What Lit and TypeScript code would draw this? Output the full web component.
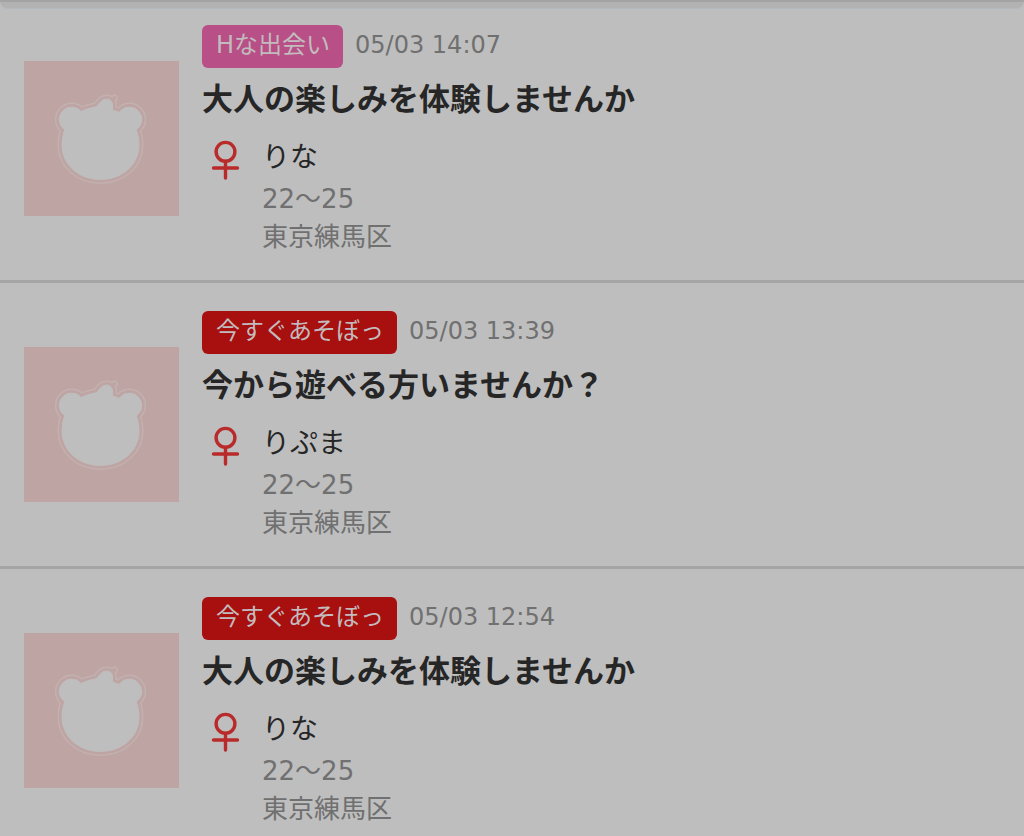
import { LitElement, html, css, svg } from "lit";
import { customElement, property } from "lit/decorators.js";

interface Post {
  category: string;
  tone: "pink" | "red";
  time: string;
  title: string;
  name: string;
  age: string;
  area: string;
}

const POSTS: Post[] = [
  { category: "Hな出会い", tone: "pink", time: "05/03 14:07", title: "大人の楽しみを体験しませんか", name: "りな", age: "22〜25", area: "東京練馬区" },
  { category: "今すぐあそぼっ", tone: "red", time: "05/03 13:39", title: "今から遊べる方いませんか？", name: "りぷま", age: "22〜25", area: "東京練馬区" },
  { category: "今すぐあそぼっ", tone: "red", time: "05/03 12:54", title: "大人の楽しみを体験しませんか", name: "りな", age: "22〜25", area: "東京練馬区" },
];

// Bear silhouette: two ears, a head and a sprout; reused for outline and fill.
const bear = svg`
  <circle cx="47.7" cy="58.5" r="12.4"/>
  <circle cx="105.3" cy="58.5" r="12.4"/>
  <path d="M58 50C63 47.500 69 46.500 73 45.500C75.500 41 79 38 83 38C86.500 38 88.500 41 88.500 44V49C96 51 106 56 111 66C114 72 115 78 115 84C115 104 98 118.500 76.500 118.500C55 118.500 38 104 38 84C38 78 39 72 41.500 67Z"/>`;

@customElement("post-row")
export class PostRow extends LitElement {
  @property({ attribute: false }) post!: Post;

  static styles = css`
    :host { display: block; }
    .row {
      display: flex;
      align-items: center;
      gap: 23px;
      padding: 24px;
      border-bottom: 3px solid #a5a5a5;
      color: inherit;
      text-decoration: none;
    }
    .avatar { flex: none; width: 155px; height: 155px; background: #bea4a3; }
    .rim { fill: #c2b1b0; stroke: #c2b1b0; stroke-width: 9; stroke-linejoin: round; }
    .gap { fill: #bea4a3; stroke: #bea4a3; stroke-width: 6; stroke-linejoin: round; }
    .face { fill: #bebebe; stroke: #bebebe; stroke-width: 1; }
    .stem-rim { fill: none; stroke: #c2b1b0; stroke-width: 7; stroke-linecap: round; }
    .stem-gap { fill: none; stroke: #bea4a3; stroke-width: 4; stroke-linecap: round; }
    .body { flex: 1; min-width: 0; padding-top: 4px; }
    .meta { display: flex; align-items: flex-start; gap: 12px; }
    .badge {
      padding: 0 13px 3px 14px;
      border-radius: 6px;
      font-size: 24px;
      line-height: 40px;
      color: #c2bcbe;
    }
    .pink { background: #b84f86; }
    .red { background: #a80f0f; }
    .time { font-size: 24px; line-height: 40px; color: #707070; }
    .title { margin: 8px 0 14px; font-size: 31px; line-height: 46px; font-weight: 700; color: #262626; }
    .person { display: flex; align-items: flex-start; gap: 14px; }
    .sex { flex: none; width: 46px; height: 50px; }
    .sex path, .sex circle { fill: none; stroke: #b92a2a; stroke-width: 3.4; stroke-linecap: round; }
    .name { font-size: 28px; line-height: 44px; color: #262626; }
    .detail { font-size: 26px; line-height: 38px; color: #707070; }
  `;

  render() {
    const p = this.post;
    return html`
      <a class="row" href="#">
        <svg class="avatar" viewBox="0 0 155 155" aria-hidden="true">
          <g class="rim">${bear}</g>
          <path class="stem-rim" d="M88 45C87.500 40 88.500 38 90.500 37"/>
          <g class="gap">${bear}</g>
          <path class="stem-gap" d="M88 45C87.500 40 88.500 38 90.500 37"/>
          <g class="face">${bear}</g>
        </svg>
        <div class="body">
          <div class="meta">
            <span class="badge ${p.tone}">${p.category}</span>
            <time class="time">${p.time}</time>
          </div>
          <h2 class="title">${p.title}</h2>
          <div class="person">
            <svg class="sex" viewBox="0 0 46 50" role="img" aria-label="女性">
              <circle cx="23.500" cy="15.800" r="9.400"/>
              <path d="M23.500 25.500V42M11.500 32H35.500"/>
            </svg>
            <div>
              <div class="name">${p.name}</div>
              <div class="detail">${p.age}</div>
              <div class="detail">${p.area}</div>
            </div>
          </div>
        </div>
      </a>`;
  }
}

@customElement("app-root")
export class AppRoot extends LitElement {
  static styles = css`
    :host {
      display: block;
      position: relative;
      height: 100vh;
      overflow: hidden;
      background: #bebebe;
      font-family: "DejaVu Sans", "Noto Sans CJK JP", sans-serif;
    }
    .edge {
      position: absolute;
      inset: 0 0 auto;
      height: 9px;
      box-sizing: border-box;
      border-top: 2px solid #a3a3a3;
      border-bottom: 1px solid #b3babd;
      border-radius: 0 0 8px 8px;
      background: #b2b2b2;
    }
    .list { margin: -3px 0 0; padding: 0; list-style: none; }
  `;

  render() {
    return html`
      <ul class="list" lang="ja">
        ${POSTS.map((post) => html`<li><post-row .post=${post}></post-row></li>`)}
      </ul>
      <div class="edge"></div>`;
  }
}
